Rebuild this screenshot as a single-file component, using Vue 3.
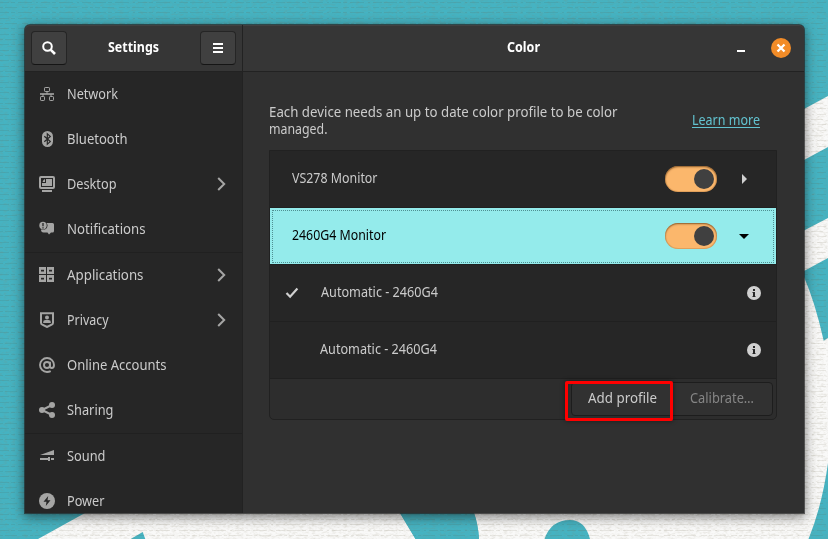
<script setup>
import { nextTick } from 'vue'

const groups = [
  [
    { name: 'Network', icon: 'network', w: 51 },
    { name: 'Bluetooth', icon: 'bluetooth', w: 60.5 },
    { name: 'Desktop', icon: 'desktop', w: 49.5, more: true },
    { name: 'Notifications', icon: 'notifications', w: 78.5 }
  ],
  [
    { name: 'Applications', icon: 'applications', w: 76.5, more: true },
    { name: 'Privacy', icon: 'privacy', w: 41.5, more: true },
    { name: 'Online Accounts', icon: 'accounts', w: 99.5 },
    { name: 'Sharing', icon: 'sharing', w: 46.5 }
  ],
  [
    { name: 'Sound', icon: 'sound', w: 38.5 },
    { name: 'Power', icon: 'power', w: 37.5 }
  ]
]

// Condenses a label horizontally so that it takes the given width.
const fit = (el, width) => {
  const natural = el.getBoundingClientRect().width
  if (natural) {
    el.style.transform = `scaleX(${width / natural})`
    el.style.marginRight = `${width - natural}px`
  }
}
const vFit = { mounted: (el, b) => nextTick(() => fit(el, b.value)) }
</script>

<template>
  <div class="desktop">
    <svg class="wallpaper" width="828" height="539" viewBox="0 0 828 539">
      <defs>
        <filter id="weave" x="0" y="0" width="100%" height="100%">
          <feTurbulence type="fractalNoise" baseFrequency="0.25 0.5" numOctaves="3" seed="8" />
          <feColorMatrix values="0 0 0 0 0.25  0 0 0 0 0.22  0 0 0 0 0.14  0 0.4 0 0 -0.17" />
        </filter>
        <pattern id="threads" width="97" height="16" patternUnits="userSpaceOnUse">
          <path d="M0 2.500h97M0 12.500h97" stroke="#51472c" stroke-opacity=".11" stroke-dasharray="9 2 4 3 14 4 2 3" />
          <path d="M0 7.500h97" stroke="#51472c" stroke-opacity=".1" stroke-dasharray="3 2 12 5 6 2" />
        </pattern>
      </defs>
      <rect width="828" height="539" fill="#45b3c2" />
      <path fill="#f9f9f8" d="M780 122L828 96V147L780 173zM780 243L828 218V258L780 284zM790 240L804 277Q815 302 823.700 340.700L828 338V463Q822 506 808.500 539H590Q585 520 570 520Q551 520 544.500 539H479Q478 524 474 513V490H390L400 513L415.500 539H145.300L142.700 532L130.700 539H38L85 513L125 490H790z" />
      <path fill="#45b3c2" d="M390 480L400 513L415.500 539H479Q478 524 474 513V480z" />
      <rect width="828" height="539" fill="url(#threads)" />
      <rect width="828" height="539" filter="url(#weave)" />
    </svg>

    <main class="window">
      <header class="bar">
        <div class="bar-side">
          <button class="tool">
            <svg width="16" height="16" viewBox="0 0 16 16" fill="none" stroke="#fff"><circle cx="6.500" cy="6.500" r="4.300" stroke-width="2" /><path d="M9.800 9.800L14 14" stroke-width="2.600" /></svg>
          </button>
          <h1><span v-fit="51" class="fit">Settings</span></h1>
          <button class="tool">
            <svg width="16" height="16" viewBox="0 0 16 16" fill="#fff"><path d="M3 3h10v2H3zM3 7h10v2H3zM3 11h10v2H3z" /></svg>
          </button>
        </div>
        <div class="bar-main">
          <h1><span v-fit="33" class="fit">Color</span></h1>
          <div class="controls">
            <svg class="minimize" width="8" height="2"><rect width="8" height="2" fill="#fff" /></svg>
            <svg class="close" width="20" height="20" viewBox="0 0 20 20"><circle cx="10" cy="10" r="10" fill="#f28c28" /><path d="M6.500 6.500l7 7M13.500 6.500l-7 7" stroke="#fff" stroke-width="2.300" /></svg>
          </div>
        </div>
      </header>

      <div class="body">
        <nav class="sidebar">
          <ul v-for="(group, g) in groups" :key="g">
            <li v-for="item in group" :key="item.name">
              <svg class="icon" width="16" height="16" viewBox="0 0 16 16" fill="#a5a5a4">
                <g v-if="item.icon === 'network'" fill="none" stroke="#a5a5a4">
                  <rect x="5.500" y="1.500" width="5" height="4" rx=".7" /><rect x="1.500" y="10.500" width="4" height="4" rx=".7" /><rect x="10.500" y="10.500" width="4" height="4" rx=".7" />
                  <path d="M8 6v2M4 8v2M12 8v2" /><path d="M1 8h14" stroke-width="1.600" />
                </g>
                <g v-else-if="item.icon === 'bluetooth'">
                  <rect x="3" width="11" height="16" rx="5.500" />
                  <path d="M5.300 5.200l6 5.400-3 2.600V2.800l3 2.600-6 5.400" fill="none" stroke="#262626" stroke-width="1.200" />
                </g>
                <g v-else-if="item.icon === 'desktop'">
                  <rect x="1" y="1" width="14" height="11" rx="1" fill="none" stroke="#a5a5a4" stroke-width="2" />
                  <path d="M3 14h10v2H3zM7 3h6v7H3V7h4z" /><path d="M3.500 6l1-2 1.500-1v3z" />
                </g>
                <g v-else-if="item.icon === 'notifications'">
                  <path d="M7.500 2H13.500Q15 2 15 3.500V10Q15 11.500 13.500 11.500H12L10 13.500L8.500 11.500H4.500Q2 11.500 2 8.500H6Q8.700 7 8.600 4.500Q8.500 3 7.500 2z" />
                  <circle cx="4" cy="4.500" r="3.700" /><path d="M4 2v3.200M4 6.200v1.300" stroke="#262626" stroke-width="1.300" />
                </g>
                <g v-else-if="item.icon === 'applications'" fill="none" stroke="#a5a5a4" stroke-width="2">
                  <rect x="1" y="1" width="5" height="5" /><rect x="9" y="1" width="5" height="5" /><rect x="1" y="9" width="5" height="5" /><rect x="9" y="9" width="5" height="5" />
                  <path d="M2 2.300h3M10 2.300h3M2 10.300h3M10 10.300h3M2 5h3M10 5h3M2 13h3M10 13h3" stroke-width="1" />
                </g>
                <g v-else-if="item.icon === 'privacy'">
                  <path d="M2 1.200h12v9.500q0 1.400-1.300 2L8 15l-4.700-2.300Q2 12.100 2 10.700z" fill="none" stroke="#a5a5a4" stroke-width="2" />
                  <circle cx="8" cy="5.500" r="2" /><path d="M4.200 11V10q0-2 2.300-2h3q2.300 0 2.300 2v1z" />
                </g>
                <g v-else-if="item.icon === 'accounts'" fill="none" stroke="#a5a5a4" stroke-width="1.900">
                  <circle cx="8" cy="8" r="3" /><path d="M11 4.800v4.500q0 1.700 1.700 1.700Q15 11 15 8a7 7 0 1 0-7 7q2 0 3.700-.9" />
                </g>
                <g v-else-if="item.icon === 'sharing'">
                  <path d="M13 3L3 8l10 5" fill="none" stroke="#a5a5a4" stroke-width="2" /><circle cx="3" cy="8" r="3" /><circle cx="13" cy="3" r="3" /><circle cx="13" cy="13" r="3" />
                </g>
                <g v-else-if="item.icon === 'sound'">
                  <path d="M1 7L15 2v5zM1 10h8v2H1zM9 9h2v4H9zM12 10h3v2h-3z" />
                </g>
                <g v-else>
                  <circle cx="8" cy="8" r="8" /><path d="M9.200 3L4.500 8.800h3L6.800 13l4.700-5.800h-3z" fill="#262626" />
                </g>
              </svg>
              <span v-fit="item.w" class="fit">{{ item.name }}</span>
              <svg v-if="item.more" class="chevron" width="9" height="14" viewBox="0 0 9 14"><path d="M1.200 1L7.200 7l-6 6" fill="none" stroke="#a5a5a4" stroke-width="2" /></svg>
            </li>
          </ul>
        </nav>

        <section class="content">
          <div class="intro">
            <p><span v-fit="348.500" class="fit">Each device needs an up to date color profile to be color</span><span v-fit="58.500" class="fit">managed.</span></p>
            <a><span v-fit="68" class="fit">Learn more</span></a>
          </div>

          <div class="card">
            <div class="row device">
              <span v-fit="85.500" class="fit">VS278 Monitor</span>
              <i class="switch"></i>
              <svg class="arrow" width="10" height="10"><path d="M3 0l5 5L3 10z" fill="#d0d0d0" /></svg>
            </div>
            <div class="row device selected">
              <span v-fit="94" class="fit">2460G4 Monitor</span>
              <i class="switch"></i>
              <svg class="arrow" width="10" height="10"><path d="M0 3h10L5 8z" fill="#000" /></svg>
            </div>
            <div v-for="n in 2" :key="n" class="row profile">
              <svg class="check" :class="{ shifted: n === 2 }" width="14" height="12" viewBox="0 0 14 12"><path v-if="n === 1" d="M1.500 6l3.600 3.700L12.400 1.500" fill="none" stroke="#d0d0d0" stroke-width="2.200" /></svg>
              <span v-fit="117" class="fit">Automatic - 2460G4</span>
              <svg class="info" width="14" height="14" viewBox="0 0 14 14"><circle cx="7" cy="7" r="7" fill="#d0d0d0" /><path d="M6 3h2v2H6zM5.500 6H8v4h.5v1h-3v-1H6V7h-.5z" fill="#262626" /></svg>
            </div>
            <div class="actions">
              <div class="linked">
                <button class="add"><span v-fit="69" class="fit">Add profile</span><i class="highlight"></i></button>
                <button class="calibrate" disabled><span v-fit="64" class="fit">Calibrate…</span></button>
              </div>
            </div>
          </div>
        </section>
      </div>
    </main>
  </div>
</template>

<style>
body { overflow: hidden; }
</style>

<style scoped>
* { box-sizing: border-box; }
.desktop {
  position: relative;
  width: 828px;
  height: 539px;
  padding: 25px 24px 26px 25px;
  overflow: hidden;
  font: 13.6px/17px "Noto Sans", sans-serif;
  color: #cbcbcb;
}
.wallpaper { position: absolute; inset: 0; }
.window {
  position: relative;
  width: 779px;
  height: 488px;
  display: flex;
  flex-direction: column;
  background: #303030;
  border-radius: 5px 5px 0 0;
  box-shadow: 0 0 0 1px rgba(35, 35, 35, .68), 0 3px 12px 1px rgba(0, 0, 0, .5);
}
.bar {
  display: flex;
  flex: 0 0 47px;
  background: #363636;
  border-bottom: 1px solid #222;
  border-radius: 5px 5px 0 0;
  box-shadow: inset 0 1px #414141;
}
.bar-side {
  width: 218px;
  display: flex;
  align-items: center;
  justify-content: space-between;
  padding: 0 6px;
  border-right: 1px solid #222;
}
.bar-main {
  flex: 1;
  display: grid;
  grid-template-columns: 1fr auto 1fr;
  align-items: center;
  padding-right: 13px;
  padding-left: 13px;
}
.bar-main h1 { grid-column: 2; }
.controls {
  grid-column: 3;
  display: flex;
  align-items: center;
  justify-content: flex-end;
}
.minimize { margin: 6px 26px 0 0; }
h1 {
  margin: 0;
  display: flex;
  justify-content: center;
  font-size: 13.6px;
  font-weight: 700;
  color: #fff;
}
h1 .fit { padding-bottom: 3px; }
.tool {
  display: grid;
  place-items: center;
  width: 36px;
  height: 34px;
  padding: 0;
  border: 1px solid #252525;
  border-bottom-color: #151515;
  border-radius: 4px;
  background: #404040;
}
.fit {
  display: block;
  width: max-content;
  flex: none;
  white-space: nowrap;
  transform-origin: 0 50%;
}
.body { flex: 1; display: flex; min-height: 0; }
.sidebar {
  flex: 0 0 218px;
  overflow: hidden;
  background: #262626;
  border-right: 1px solid #222;
}
ul { margin: 0; padding: 0; list-style: none; }
ul + ul { border-top: 1px solid #202020; }
li {
  display: flex;
  align-items: center;
  height: 45px;
  padding: 0 16px 1px 14px;
}
li .fit { padding-bottom: 1px; }
.icon { margin-right: 12px; flex: none; }
.chevron { margin-left: auto; }
.content { flex: 1; padding: 31px 28px 0 26px; }
.intro {
  display: flex;
  justify-content: space-between;
  height: 47px;
  padding-right: 17px;
}
.intro p { margin: 0; }
.intro a {
  align-self: flex-start;
  margin-top: 9px;
  height: 16px;
  line-height: 16px;
  color: #62c3d0;
  border-bottom: 1px solid #62c3d0;
}
.card {
  width: 508px;
  height: 270px;
  border: 1px solid #212121;
  border-radius: 0 0 5px 5px;
  background: #2d2d2d;
}
.row {
  display: flex;
  align-items: center;
  height: 57px;
  border-bottom: 1px solid #202020;
  background: #262626;
}
.row .fit { padding-bottom: 3px; }
.device { padding: 0 27px 0 22px; }
.profile { padding: 0 15px; }
.selected {
  background: #94ebeb;
  background-clip: padding-box;
  color: #000;
  outline: 1px dotted #4f9092;
  outline-offset: -3px;
}
.switch {
  width: 52px;
  height: 26px;
  margin-left: auto;
  padding: 3px;
  border-radius: 13px;
  background: #fbb76c;
  box-shadow: inset 0 1px 2px rgba(110, 68, 28, .75), inset 0 0 0 1px rgba(150, 95, 40, .2);
}
.switch::after {
  content: "";
  display: block;
  width: 20px;
  height: 20px;
  margin-left: auto;
  border-radius: 50%;
  background: #404040;
}
.arrow { margin-left: 22px; }
.check { margin-right: 22px; }
.shifted { margin-right: 21px; }
.info { margin-left: auto; }
.actions {
  display: flex;
  justify-content: flex-end;
  padding: 3px 3px 0;
}
.linked {
  display: flex;
  width: 202px;
  height: 34px;
  border: 1px solid #1d1d1d;
  border-radius: 4px;
  background: #313131;
}
.linked button {
  padding: 0;
  border: 0;
  background: none;
  display: flex;
  align-items: center;
  font: inherit;
  color: #cbcbcb;
}
.linked .fit { padding-bottom: 3px; }
.linked .add { position: relative; width: 101px; padding-left: 16px; }
.linked .calibrate { flex: 1; padding-left: 17px; color: #858585; }
.highlight {
  position: absolute;
  left: -7px;
  top: -2px;
  width: 108px;
  height: 40px;
  border: 3px solid #f00;
  border-radius: 2px;
  box-shadow: 0 0 5px rgba(0, 0, 0, .45);
}
</style>
